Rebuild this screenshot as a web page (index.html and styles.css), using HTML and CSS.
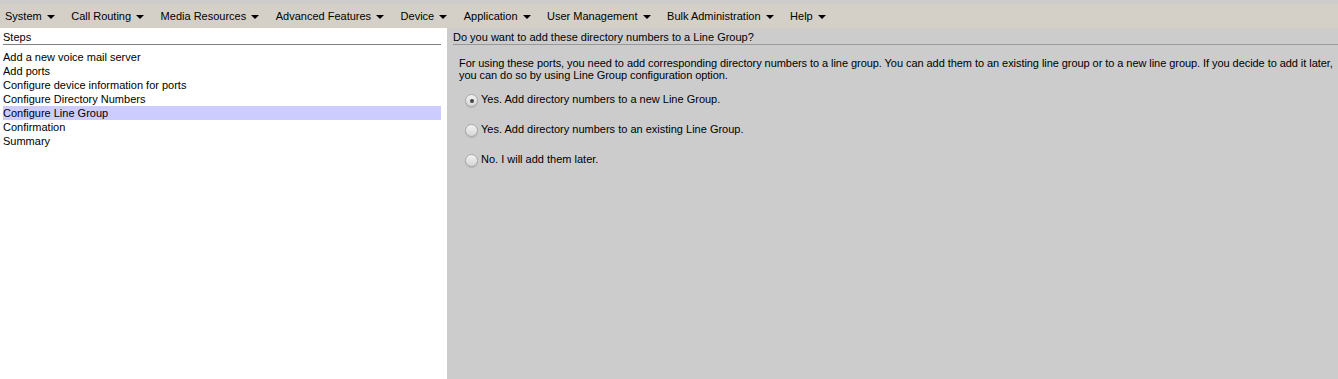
FILE: index.html
```html
<!DOCTYPE html>
<html>
<head>
<meta charset="utf-8">
<title>Voice Mail Port Wizard</title>
<link rel="stylesheet" href="styles.css">
</head>
<body>
<div class="topstrip"></div>
<nav class="menubar">
  <span class="menu">System<i class="caret"></i></span>
  <span class="menu">Call Routing<i class="caret"></i></span>
  <span class="menu">Media Resources<i class="caret"></i></span>
  <span class="menu">Advanced Features<i class="caret"></i></span>
  <span class="menu">Device<i class="caret"></i></span>
  <span class="menu">Application<i class="caret"></i></span>
  <span class="menu">User Management<i class="caret"></i></span>
  <span class="menu">Bulk Administration<i class="caret"></i></span>
  <span class="menu">Help<i class="caret"></i></span>
</nav>
<div class="main">
  <aside class="steps">
    <div class="steps-head">Steps</div>
    <ul class="step-list">
      <li>Add a new voice mail server</li>
      <li>Add ports</li>
      <li>Configure device information for ports</li>
      <li>Configure Directory Numbers</li>
      <li class="current">Configure Line Group</li>
      <li>Confirmation</li>
      <li>Summary</li>
    </ul>
  </aside>
  <section class="content">
    <div class="content-head">Do you want to add these directory numbers to a Line Group?</div>
    <div class="body">
      <p class="intro">For using these ports, you need to add corresponding directory numbers to a line group. You can add them to an existing line group or to a new line group. If you decide to add it later, you can do so by using Line Group configuration option.</p>
      <div class="options">
        <label class="option"><span class="radio checked"></span>Yes. Add directory numbers to a new Line Group.</label>
        <label class="option"><span class="radio"></span>Yes. Add directory numbers to an existing Line Group.</label>
        <label class="option"><span class="radio"></span>No. I will add them later.</label>
      </div>
    </div>
  </section>
</div>
</body>
</html>
```

FILE: styles.css
```css
html, body {
  margin: 0;
  padding: 0;
  height: 100%;
  overflow: hidden;
}
body {
  font-family: "Liberation Sans", Arial, sans-serif;
  font-size: 11px;
  color: #000;
  background: #cccccc;
  display: flex;
  flex-direction: column;
}
.topstrip {
  height: 4px;
  background: #cccccc;
  flex: none;
}
.menubar {
  height: 24px;
  flex: none;
  background: #d4d0c8;
  display: flex;
  align-items: center;
  padding-left: 5px;
  white-space: nowrap;
}
.menu {
  display: flex;
  align-items: center;
  margin-right: 16.5px;
  line-height: 14px;
}
.caret {
  display: inline-block;
  width: 0;
  height: 0;
  margin-left: 5px;
  margin-top: 1px;
  border-left: 4px solid transparent;
  border-right: 4px solid transparent;
  border-top: 4px solid #000;
}
.main {
  flex: 1;
  display: flex;
  min-height: 0;
}
.steps {
  width: 447px;
  flex: none;
  box-sizing: border-box;
  background: #fff;
  padding: 3px 6px 0 3px;
}
.steps-head {
  line-height: 13px;
  border-bottom: 1px solid #808080;
}
.step-list {
  list-style: none;
  margin: 5px 0 0;
  padding: 0;
}
.step-list li {
  line-height: 14px;
  height: 14px;
}
.step-list li.current {
  background: #ccccff;
}
.content {
  flex: 1;
  background: #cccccc;
  padding: 3px 0 0 6px;
  min-width: 0;
  overflow: hidden;
}
.content-head {
  line-height: 13px;
  border-bottom: 1px solid #999;
}
.body {
  padding: 12px 0 0 6px;
}
.intro {
  margin: 0;
  line-height: 12px;
  letter-spacing: -0.06px;
}
.options {
  display: flex;
  flex-direction: column;
  padding-left: 6px;
  margin-top: 3px;
}
.option {
  height: 30px;
  display: flex;
  align-items: center;
  line-height: 14px;
}
.radio {
  width: 11px;
  height: 11px;
  border-radius: 50%;
  border: 1px solid #a9a9a9;
  background: linear-gradient(#f2f2f2, #d6d6d6);
  box-shadow: 0 1px 1px rgba(0,0,0,0.12);
  margin: 3px 3px 0 0;
  position: relative;
  flex: none;
}
.radio.checked::after {
  content: "";
  position: absolute;
  left: 3.5px;
  top: 3.5px;
  width: 4px;
  height: 4px;
  border-radius: 50%;
  background: #444;
}
```
